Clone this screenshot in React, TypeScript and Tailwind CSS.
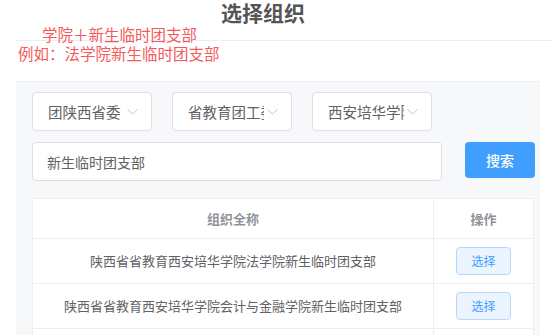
import { useState } from 'react'

const rows = [
  '陕西省省教育西安培华学院法学院新生临时团支部',
  '陕西省省教育西安培华学院会计与金融学院新生临时团支部',
  '陕西省省教育西安培华学院文学院新生临时团支部',
]

function Chevron() {
  return (
    <svg width="11" height="7" viewBox="0 0 11 7" className="absolute right-[13px] top-1/2 -translate-y-1/2">
      <polyline points="0.5,1 5.5,5.5 10.5,1" fill="none" stroke="#c0c4cc" strokeWidth="1" />
    </svg>
  )
}

function Select({ value }: { value: string }) {
  return (
    <div className="relative h-[39px] w-[120px] rounded border border-[#dcdfe6] bg-white pl-[15px] pr-[27px]">
      <div className="h-full overflow-hidden whitespace-nowrap text-[14.5px] leading-[37px] text-[#606266]">{value}</div>
      <Chevron />
    </div>
  )
}

export default function App() {
  const [keyword, setKeyword] = useState('新生临时团支部')

  return (
    <div className="relative h-[335px] w-[552px] overflow-hidden bg-white font-['Noto_Sans_CJK_SC',sans-serif]">
      <div className="ml-4 h-[41px] border-b border-[#ebeef5]">
        <div className="w-[494px] text-center text-[21px] font-bold leading-[25px] text-[#555]">选择组织</div>
      </div>

      <div className="absolute left-[18px] top-[25px] text-[15.5px] leading-[19px] text-[#f45a5a]">
        <div className="pl-[24px]">学院＋新生临时团支部</div>
        <div>例如：法学院新生临时团支部</div>
      </div>

      <div className="ml-4 mt-[40px] w-[524px] border-t border-[#ebeef5] bg-[#f7f8fa] pl-4 pt-[10px]">
        <div className="flex gap-5">
          <Select value="团陕西省委" />
          <Select value="省教育团工委" />
          <Select value="西安培华学院" />
        </div>

        <div className="mt-[11px] flex items-start gap-[23px]">
          <input
            value={keyword}
            onChange={(event) => setKeyword(event.target.value)}
            className="h-[39px] w-[410px] rounded border border-[#dcdfe6] bg-white px-[14px] text-[14px] text-[#606266] outline-none"
          />
          <button className="h-9 w-[70px] rounded bg-[#409eff] text-[14px] font-medium text-white">搜索</button>
        </div>

        <table className="mt-[17px] w-[501px] table-fixed border-collapse bg-white text-[13px] text-[#606266]">
          <colgroup>
            <col className="w-[401px]" />
            <col className="w-[100px]" />
          </colgroup>
          <thead>
            <tr className="h-10">
              <th className="border border-[#ebeef5] font-bold text-[#909399]">组织全称</th>
              <th className="border border-[#ebeef5] font-bold text-[#909399]">操作</th>
            </tr>
          </thead>
          <tbody>
            {rows.map((name) => (
              <tr key={name} className="h-[45px]">
                <td className="border border-[#ebeef5] text-center">{name}</td>
                <td className="border border-[#ebeef5] text-center">
                  <button className="h-7 w-[55px] rounded border border-[#b3d8ff] bg-[#ecf5ff] text-[12px] text-[#409eff]">
                    选择
                  </button>
                </td>
              </tr>
            ))}
          </tbody>
        </table>
      </div>
    </div>
  )
}
